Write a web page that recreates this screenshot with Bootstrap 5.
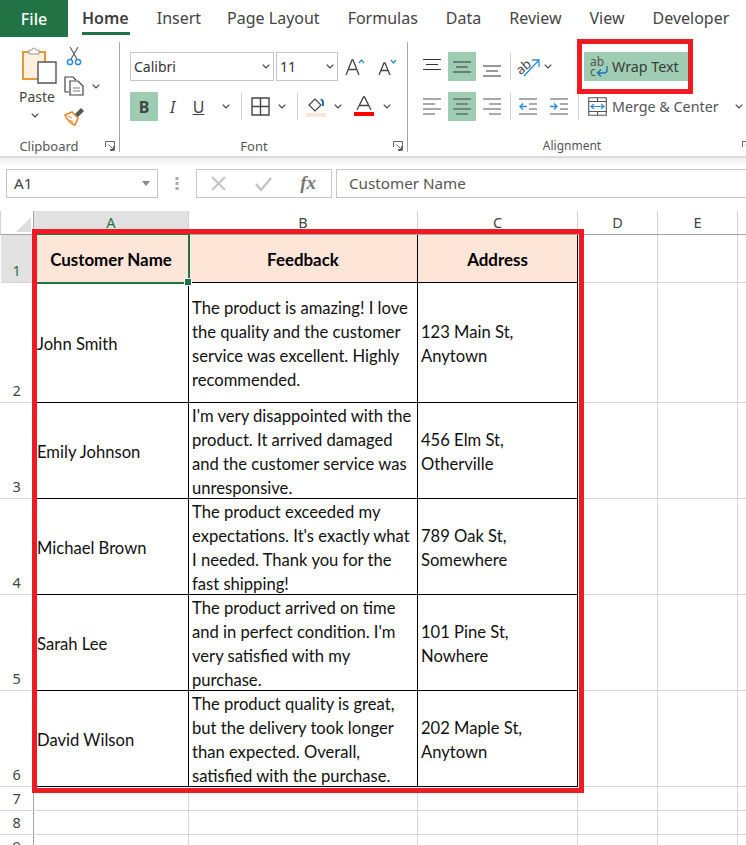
<!DOCTYPE html>
<html lang="en">
<head>
<meta charset="utf-8">
<title>Wrap Text in Excel</title>
<link href="https://cdn.jsdelivr.net/npm/bootstrap@5.3.0/dist/css/bootstrap.min.css" rel="stylesheet">
<style>
html,body{margin:0;height:845px;overflow:hidden;background:#fff}
.xl-app{width:746px;height:845px;overflow:hidden;position:relative;font-family:"Noto Sans","Open Sans",sans-serif;color:#444}
.xl-tabs{height:37px;gap:28px;font-size:16px}
.xl-file{width:68px;height:37px;background:#217346;color:#fff;font-weight:500;margin-right:-14px}
.xl-tab{height:37px;line-height:37px;white-space:nowrap}
.xl-tab-tight{margin-right:-2px}
.xl-tab-on{font-weight:600;color:#3f3f3f;position:relative}
.xl-tab-on::after{content:"";position:absolute;left:0;right:-1px;bottom:2px;height:3px;background:#217346}
.xl-ribbon{height:121px;border-bottom:2px solid #dcdcdc;font-size:14.3px}
.xl-grp{height:119px;padding-top:5px}
.xl-grp-clip{width:120px}
.xl-grp-font{width:288px}
.xl-grp-align{width:338px}
.xl-sep-right{position:relative}
.xl-sep-right::after{content:"";position:absolute;right:0;top:5px;height:110px;width:1px;background:#a6a6a6}
.xl-body{height:94px;flex:none;padding-top:10px}
.xl-label{font-size:13px;height:20px;line-height:20px;text-align:center;color:#555;position:relative;flex:none}
.xl-label-clip{padding-right:22px}
.xl-label-font{padding-right:20px}
.xl-label-align{padding-right:10px;font-size:12px}
.xl-launch{position:absolute;top:5px;right:5px;display:block}
.xl-label-align .xl-launch{right:-6px}
.xl-rows{gap:11px}
.xl-row{height:29px;align-items:center}
.xl-box{display:flex;align-items:center;justify-content:center;height:29px;flex:none}
.xl-on{background:#9fcdb3}
.xl-big{font-size:16px}
.w4{width:4px}.w8{width:8px}.w10{width:10px}.w14{width:14px}.w16{width:16px}.w20{width:20px}.w24{width:24px}.w28{width:28px}.w29{width:29px}.w30{width:30px}.w31{width:31px}.w32{width:32px}.w33{width:33px}.w36{width:36px}
.xl-vsep::before{content:"";width:1px;height:27px;background:#d0d0d0}
.xl-pad-font{padding-left:10px}
.xl-pad-align{padding-left:8px}
.xl-combo{height:29px;border:1px solid #c6c6c6;background:#fff;color:#333;font-size:14px;padding:0 3px}
.xl-combo-f{width:144px;margin-right:2px}
.xl-combo-s{width:62px;padding-left:3px}
.xl-wrap{width:104px;margin-left:32px;gap:4px;padding-left:6px;white-space:nowrap;color:#3a3a3a}
.xl-merge{white-space:nowrap;width:123px;color:#555}
.xl-clip-paste{width:62px;padding-left:22px;margin-top:-6px}
.xl-paste-text{margin-top:3px;line-height:20px;margin-left:-3px;font-size:14px}
.xl-paste-chev{margin:6px 0 0 9px}
.xl-clip-tools{padding-left:4px;gap:10px;margin-top:-6px}
.xl-clip-row{height:20px;align-items:center;width:48px}
.xl-copy{margin-left:-2px}
.xl-formula{height:53px;background:linear-gradient(#f1f1f1,#fff 9px);padding-top:11px;font-size:15.2px}
.xl-name{width:152px;height:29px;margin-left:6px;border:1px solid #c6c6c6;background:#fff;padding:0 7px;color:#444}
.xl-dots{width:38px;height:29px}
.xl-fx{width:136px;height:29px;border:1px solid #c6c6c6;background:#fff;padding:0 15px 0 14px}
.xl-input{flex:1;height:29px;margin-left:4px;border:1px solid #c6c6c6;border-right:0;background:#fff;padding:0 12px;color:#555}
.xl-fxtext{font-family:"Liberation Serif",serif;font-style:italic;font-weight:700;font-size:19px;color:#777}
.xl-sheet{border-collapse:collapse;table-layout:fixed;width:746px;font-family:"Lato","Open Sans",sans-serif;font-size:16.6px;color:#111}
.xl-sheet td,.xl-sheet th{border:1px solid #d4d4d4;padding:0;overflow:hidden}
.xl-hcell{height:23px;font-family:"Noto Sans",sans-serif;font-weight:400;font-size:14.5px;color:#444;text-align:center;line-height:23px;border-top:0!important;border-bottom:1px solid #a6a6a6!important}
.xl-hon{background:#e1e1e1;color:#217346!important}
.xl-corner{position:relative;background:#fff;border-right:1px solid #a6a6a6!important}
.xl-corner::after{content:"";position:absolute;right:2px;bottom:2px;border-style:solid;border-width:0 0 15px 15px;border-color:transparent transparent #dedede transparent}
.xl-sheet th.xl-rh{font-family:"Noto Sans",sans-serif;font-weight:400;font-size:14.5px;text-align:center;vertical-align:bottom;line-height:20px;color:#444;border-right:1px solid #a6a6a6;border-left:0;padding-bottom:2px}
.xl-sheet th.xl-rh-on{background:#e1e1e1;color:#217346}
.xl-sheet td.xl-c{border:1px solid #000;padding:2px 3px 0;line-height:24px;vertical-align:middle}
.xl-sheet td.xl-head{background:#fde5d8;font-weight:700;font-size:16.9px;text-align:center;color:#000}
.xl-lines{margin:-1px 0 -2px}
.xl-r1{height:48px}.xl-r2{height:120px}.xl-r3{height:96px}.xl-r7{height:24px}
.xl-sheet col:nth-child(1){width:33px}.xl-sheet col:nth-child(2){width:155px}.xl-sheet col:nth-child(3){width:229px}.xl-sheet col:nth-child(4){width:160px}.xl-sheet col:nth-child(5){width:80px}.xl-sheet col:nth-child(6){width:80px}.xl-sheet col:nth-child(7){width:9px}
.xl-sel{position:absolute;left:33px;top:233px;width:157px;height:51px;border:2px solid #217346;pointer-events:none}
.xl-handle{position:absolute;right:-4px;bottom:-4px;width:6px;height:6px;background:#217346;border:1px solid #fff;box-sizing:content-box}
.xl-red{position:absolute;border:5px solid #ed1c24;pointer-events:none}
.xl-red-wrap{left:577px;top:39px;width:116px;height:55px}
.xl-red-tbl{left:32px;top:229px;width:552px;height:564px}
svg{display:block;flex:none;overflow:visible}
</style>
</head>
<body>
<svg width="0" height="0" class="position-absolute">
  <symbol id="chev" viewBox="0 0 8 5"><path d="M.7.7 4 4l3.300-3.300" fill="none" stroke="#444" stroke-width="1.200"/></symbol>
  <symbol id="launch" viewBox="0 0 10 10"><path d="M.5 6V.5h9v9H5M3.500 3.500l5 5M8.500 5v3.500H5" fill="none" stroke="#666"/></symbol>
</svg>
<div class="xl-app">
  <div class="xl-tabs d-flex">
    <div class="xl-file d-flex align-items-center justify-content-center">File</div>
    <div class="xl-tab xl-tab-on">Home</div>
    <div class="xl-tab xl-tab-tight">Insert</div>
    <div class="xl-tab">Page Layout</div>
    <div class="xl-tab">Formulas</div>
    <div class="xl-tab">Data</div>
    <div class="xl-tab">Review</div>
    <div class="xl-tab">View</div>
    <div class="xl-tab">Developer</div>
  </div>

  <div class="xl-ribbon d-flex">
    <div class="xl-grp xl-grp-clip xl-sep-right d-flex flex-column">
      <div class="xl-body d-flex">
        <div class="xl-clip-paste d-flex flex-column align-items-start">
          <svg width="35" height="38" viewBox="0 0 35 38"><path d="M1 6h22v27H1z" fill="#fdf0df" stroke="#e8983c" stroke-width="2"/><path d="M7 8V4h3a2 2 0 0 1 4 0h3v4z" fill="#fff" stroke="#999"/><path d="M16 16h18v21H16z" fill="#fff" stroke="#555" stroke-width="1.400"/></svg>
          <div class="xl-paste-text">Paste</div>
          <svg class="xl-paste-chev" width="8" height="5"><use href="#chev"/></svg>
        </div>
        <div class="xl-clip-tools d-flex flex-column">
          <div class="xl-clip-row d-flex"><svg width="16" height="20" viewBox="0 0 16 20"><path d="M4 1l7 12M12 1 5 13" stroke="#555" stroke-width="1.100" fill="none"/><circle cx="4" cy="16" r="2.600" fill="none" stroke="#2e8ad8" stroke-width="1.500"/><circle cx="12" cy="16" r="2.600" fill="none" stroke="#2e8ad8" stroke-width="1.500"/></svg></div>
          <div class="xl-clip-row d-flex"><svg class="xl-copy" width="20" height="20" viewBox="0 0 20 20"><path d="M5 16H1V1h8l3 3" fill="none" stroke="#444" stroke-width="1.200"/><path d="M6 5h8l5 5v9H6z" fill="#fff" stroke="#444" stroke-width="1.200"/><path d="M9 12h7M9 15h7" stroke="#777"/></svg><svg class="ms-2" width="8" height="5"><use href="#chev"/></svg></div>
          <div class="xl-clip-row d-flex"><svg class="xl-copy" width="21" height="20" viewBox="0 0 21 20"><path d="M1 9l7-3 6 6-3 7c-3-.5-8-5-10-10z" fill="#fff" stroke="#e8862a" stroke-width="1.600"/><path d="M4 10l4 2M6 14l3 2" stroke="#e8862a"/><path d="M11 8l6-6 3 3-6 6z" fill="#555"/></svg></div>
        </div>
      </div>
      <div class="xl-label xl-label-clip">Clipboard<svg class="xl-launch" width="10" height="10"><use href="#launch"/></svg></div>
    </div>

    <div class="xl-grp xl-grp-font xl-sep-right d-flex flex-column">
      <div class="xl-body xl-pad-font d-flex flex-column xl-rows">
        <div class="xl-row d-flex">
          <div class="xl-combo xl-combo-f d-flex align-items-center justify-content-between">Calibri<svg width="8" height="5"><use href="#chev"/></svg></div>
          <div class="xl-combo xl-combo-s d-flex align-items-center justify-content-between">11<svg width="8" height="5"><use href="#chev"/></svg></div>
          <div class="xl-box w33"><svg width="20" height="18" viewBox="0 0 20 18"><path d="M1 17 7 2h1l6 15M3.500 11.500h8" fill="none" stroke="#444" stroke-width="1.300"/><path d="M14 5l2.500-3L19 5" fill="none" stroke="#2e8ad8" stroke-width="1.300"/></svg></div>
          <div class="xl-box w32"><svg width="20" height="18" viewBox="0 0 20 18"><path d="M2 17 7 5h1l5 12M4 12.500h7" fill="none" stroke="#444" stroke-width="1.300"/><path d="M14 2l2.500 3L19 2" fill="none" stroke="#2e8ad8" stroke-width="1.300"/></svg></div>
        </div>
        <div class="xl-row d-flex">
          <div class="xl-box w28 xl-on xl-big fw-bold">B</div>
          <div class="xl-box w29 xl-big fst-italic">I</div>
          <div class="xl-box w31 xl-big pe-2 text-decoration-underline">U</div>
          <div class="xl-box w16"><svg width="8" height="5"><use href="#chev"/></svg></div>
          <div class="xl-box w14 xl-vsep"></div>
          <div class="xl-box w24"><svg width="19" height="19" viewBox="0 0 19 19"><path d="M1 1h17v17H1zM9.500 1v17M1 9.500h17" fill="none" stroke="#444" stroke-width="1.400"/></svg></div>
          <div class="xl-box w20"><svg width="8" height="5"><use href="#chev"/></svg></div>
          <div class="xl-box w10 xl-vsep"></div>
          <div class="xl-box w28"><svg width="20" height="21" viewBox="0 0 20 21"><path d="M3 9l6-6 6 6-6 6z" fill="#fff" stroke="#444" stroke-width="1.200"/><path d="M14 3a3 3 0 0 1 4 3v4h-2V6z" fill="#2470b8"/><path d="M0 17h20v4H0z" fill="#fde5d8"/></svg></div>
          <div class="xl-box w16"><svg width="8" height="5"><use href="#chev"/></svg></div>
          <div class="xl-box w36"><svg width="20" height="21" viewBox="0 0 20 21"><path d="M3 14 9.500 1h1L17 14M5.500 9.500h9" fill="none" stroke="#444" stroke-width="1.300"/><path d="M0 16h20v4H0z" fill="#f00"/></svg></div>
          <div class="xl-box w10"><svg width="8" height="5"><use href="#chev"/></svg></div>
        </div>
      </div>
      <div class="xl-label xl-label-font">Font<svg class="xl-launch" width="10" height="10"><use href="#launch"/></svg></div>
    </div>

    <div class="xl-grp xl-grp-align d-flex flex-column">
      <div class="xl-body xl-pad-align d-flex flex-column xl-rows">
        <div class="xl-row d-flex">
          <div class="xl-box w32"><svg width="18" height="16" viewBox="0 0 18 16"><path d="M0 1h18M3 6h12M0 11h18" stroke="#333" stroke-width="1.200" transform="translate(0 -.5)"/></svg></div>
          <div class="xl-box w28 xl-on"><svg width="18" height="12" viewBox="0 0 18 12"><path d="M0 1h18M3 6h12M0 11h18" stroke="#333" stroke-width="1.200"/></svg></div>
          <div class="xl-box w32"><svg width="18" height="22" viewBox="0 0 18 22"><path d="M0 10h18M3 15h12M0 20h18" stroke="#333" stroke-width="1.200"/></svg></div>
          <div class="xl-box w4 xl-vsep"></div>
          <div class="xl-box w32"><svg width="23" height="20" viewBox="0 0 23 20"><text x="-1" y="14" font-size="13" fill="#444" font-family="Noto Sans" transform="rotate(-40 7 10)">ab</text><path d="M7 19 21 4M15 3h7v7" fill="none" stroke="#2e8ad8" stroke-width="1.300"/></svg></div>
          <div class="xl-box w8"><svg width="8" height="5"><use href="#chev"/></svg></div>
          <div class="xl-box xl-on xl-wrap justify-content-start"><svg width="18" height="22" viewBox="0 0 18 22"><text x="0" y="9.500" font-size="12" fill="#555" font-family="Noto Sans">ab</text><text x="0" y="20" font-size="12" fill="#555" font-family="Noto Sans">c</text><path d="M17 10v4a3 3 0 0 1-3 3H8M11 13.500 7.500 17l3.500 3.500" fill="none" stroke="#2470b8" stroke-width="1.400"/></svg>Wrap Text</div>
        </div>
        <div class="xl-row d-flex">
          <div class="xl-box w32"><svg width="18" height="17" viewBox="0 0 18 17"><path d="M0 1h18M0 6h12M0 11h18M0 16h12" stroke="#555" stroke-width="1.200"/></svg></div>
          <div class="xl-box w28 xl-on"><svg width="18" height="17" viewBox="0 0 18 17"><path d="M0 1h18M3 6h12M0 11h18M3 16h12" stroke="#444" stroke-width="1.200"/></svg></div>
          <div class="xl-box w32"><svg width="18" height="17" viewBox="0 0 18 17"><path d="M0 1h18M6 6h12M0 11h18M6 16h12" stroke="#555" stroke-width="1.200"/></svg></div>
          <div class="xl-box w4 xl-vsep"></div>
          <div class="xl-box w32"><svg width="18" height="17" viewBox="0 0 18 17"><path d="M0 1h18M10 6h8M10 11h8M0 16h18" stroke="#555"/><path d="M8 8.500H1M4 5.500l-3 3 3 3" fill="none" stroke="#2e8ad8" stroke-width="1.300"/></svg></div>
          <div class="xl-box w30"><svg width="18" height="17" viewBox="0 0 18 17"><path d="M0 1h18M10 6h8M10 11h8M0 16h18" stroke="#555"/><path d="M0 8.500h7M4 5.500l3 3-3 3" fill="none" stroke="#2e8ad8" stroke-width="1.300"/></svg></div>
          <div class="xl-box w8 xl-vsep"></div>
          <div class="xl-box w30"><svg width="19" height="19" viewBox="0 0 19 19"><path d="M.7.700h17.600v17.600H.7zM.7 4.500h17.600M.7 14.500h17.600M9.500.7v3.800M9.500 14.500v3.800" fill="none" stroke="#555" stroke-width="1.100"/><path d="M3 9.500h13M6 7 3 9.500 6 12M13 7l3 2.500L13 12" fill="none" stroke="#2e8ad8" stroke-width="1.200"/></svg></div>
          <div class="xl-box xl-merge justify-content-start">Merge &amp; Center<svg class="ms-3" width="8" height="5"><use href="#chev"/></svg></div>
        </div>
      </div>
      <div class="xl-label xl-label-align">Alignment<svg class="xl-launch" width="10" height="10"><use href="#launch"/></svg></div>
    </div>
  </div>

  <div class="xl-formula d-flex">
    <div class="xl-name d-flex align-items-center justify-content-between">A1<svg width="8" height="5" viewBox="0 0 8 5"><path d="M0 0h8L4 5z" fill="#888"/></svg></div>
    <div class="xl-dots d-flex align-items-center justify-content-center"><svg width="4" height="15" viewBox="0 0 4 15"><path d="M.5 1h3v3h-3zM.5 6h3v3h-3zM.5 11h3v3h-3z" fill="#aaa"/></svg></div>
    <div class="xl-fx d-flex align-items-center justify-content-between">
      <svg width="15" height="15" viewBox="0 0 15 15"><path d="M1 1l13 13M14 1 1 14" stroke="#c4c4c4" stroke-width="2"/></svg>
      <svg width="17" height="14" viewBox="0 0 17 14"><path d="M1 7l5 6L16 1" fill="none" stroke="#c4c4c4" stroke-width="2.400"/></svg>
      <span class="xl-fxtext">fx</span>
    </div>
    <div class="xl-input d-flex align-items-center">Customer Name</div>
  </div>

  <table class="xl-sheet">
    <colgroup><col><col><col><col><col><col><col></colgroup>
    <thead>
      <tr><th class="xl-hcell xl-corner"></th><th class="xl-hcell xl-hon">A</th><th class="xl-hcell">B</th><th class="xl-hcell">C</th><th class="xl-hcell">D</th><th class="xl-hcell">E</th><th class="xl-hcell"></th></tr>
    </thead>
    <tbody>
      <tr class="xl-r1"><th class="xl-rh xl-rh-on">1</th><td class="xl-c xl-head">Customer Name</td><td class="xl-c xl-head">Feedback</td><td class="xl-c xl-head">Address</td><td></td><td></td><td></td></tr>
      <tr class="xl-r2"><th class="xl-rh">2</th><td class="xl-c">John Smith</td><td class="xl-c"><div class="xl-lines">The product is amazing! I love the quality and the customer service was excellent. Highly recommended.</div></td><td class="xl-c">123 Main St, Anytown</td><td></td><td></td><td></td></tr>
      <tr class="xl-r3"><th class="xl-rh">3</th><td class="xl-c">Emily Johnson</td><td class="xl-c"><div class="xl-lines">I'm very disappointed with the product. It arrived damaged and the customer service was unresponsive.</div></td><td class="xl-c">456 Elm St, Otherville</td><td></td><td></td><td></td></tr>
      <tr class="xl-r3"><th class="xl-rh">4</th><td class="xl-c">Michael Brown</td><td class="xl-c"><div class="xl-lines">The product exceeded my expectations. It's exactly what I needed. Thank you for the fast shipping!</div></td><td class="xl-c">789 Oak St, Somewhere</td><td></td><td></td><td></td></tr>
      <tr class="xl-r3"><th class="xl-rh">5</th><td class="xl-c">Sarah Lee</td><td class="xl-c"><div class="xl-lines">The product arrived on time and in perfect condition. I'm very satisfied with my purchase.</div></td><td class="xl-c">101 Pine St, Nowhere</td><td></td><td></td><td></td></tr>
      <tr class="xl-r3"><th class="xl-rh">6</th><td class="xl-c">David Wilson</td><td class="xl-c"><div class="xl-lines">The product quality is great, but the delivery took longer than expected. Overall, satisfied with the purchase.</div></td><td class="xl-c">202 Maple St, Anytown</td><td></td><td></td><td></td></tr>
      <tr class="xl-r7"><th class="xl-rh">7</th><td></td><td></td><td></td><td></td><td></td><td></td></tr>
      <tr class="xl-r7"><th class="xl-rh">8</th><td></td><td></td><td></td><td></td><td></td><td></td></tr>
      <tr class="xl-r7"><th class="xl-rh">9</th><td></td><td></td><td></td><td></td><td></td><td></td></tr>
    </tbody>
  </table>

  <div class="xl-sel"><div class="xl-handle"></div></div>
  <div class="xl-red xl-red-wrap"></div>
  <div class="xl-red xl-red-tbl"></div>
</div>
<script src="https://cdn.jsdelivr.net/npm/bootstrap@5.3.0/dist/js/bootstrap.bundle.min.js"></script>
</body>
</html>
